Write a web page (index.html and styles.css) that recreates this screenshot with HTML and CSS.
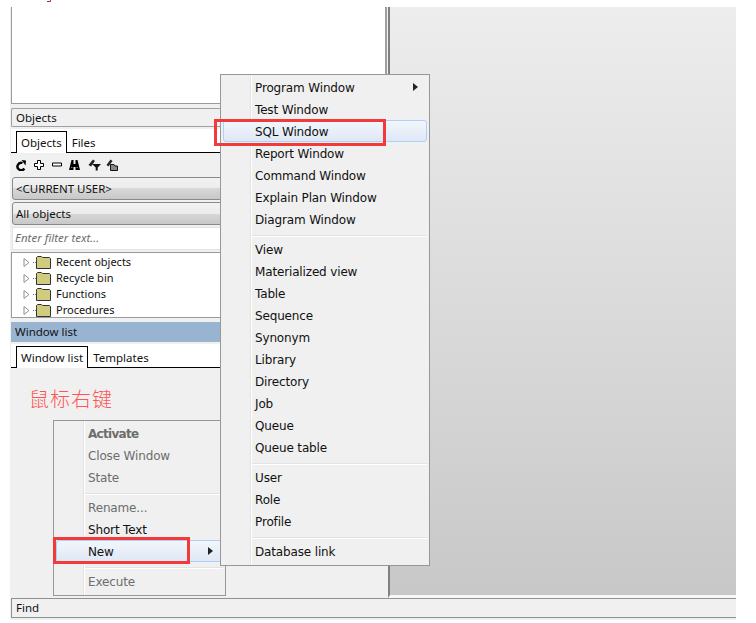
FILE: index.html
```html
<!DOCTYPE html>
<html lang="en">
<head>
<meta charset="utf-8">
<title>PL/SQL Developer</title>
<link rel="stylesheet" href="styles.css">
</head>
<body>
<div class="page">
  <div class="crumb"><svg class="brace" width="6" height="7" viewBox="0 0 6 7"><path d="M4.5 0 V1.5 H1" fill="none" stroke="#a03030" stroke-width="1"/></svg></div>
  <div class="app">
    <div class="main">
      <div class="left">
        <div class="editor"></div>
        <div class="panel-head">Objects</div>
        <div class="tabs">
          <span class="tab active">Objects</span><span class="tab">Files</span>
        </div>
        <div class="toolbar">
          <svg width="10" height="11" viewBox="0 0 10 11"><path d="M8.3 8.5 A3.7 3.7 0 1 1 6.5 3" fill="none" stroke="#000" stroke-width="2.4"/><path d="M5.5 0 L10 .5 L9.5 5.5 Z" fill="#000"/></svg>
          <svg width="10" height="10" viewBox="0 0 10 10"><path d="M3.5 .5 H6.5 V3.5 H9.5 V6.5 H6.5 V9.5 H3.5 V6.5 H.5 V3.5 H3.5 Z" fill="#fff" stroke="#000"/></svg>
          <svg width="10" height="10" viewBox="0 0 10 10"><path d="M.5 3 H9.5 V6 H.5 Z" fill="#fff" stroke="#000"/></svg>
          <svg class="tool-binoc" width="11" height="11" viewBox="0 0 11 11"><path d="M1.5 4 L2.5 0 H4.5 V4 H6.5 V0 H8.5 L9.5 4 L11 10 H6.5 V7 H4.5 V10 H0 Z" fill="#000"/><path d="M2 7.5 H3.5 M7.5 7.5 H9" stroke="#777"/></svg>
          <svg width="13" height="12" viewBox="0 0 13 12"><path d="M.5 6 L5 .5 L7 2 L3 7.5 Z" fill="#222"/><path d="M4 5 H13 L9.7 8.5 V11.5 H7.7 V8.5 Z" fill="#111"/></svg>
          <svg class="tool-key" width="12" height="12" viewBox="0 0 12 12"><path d="M.5 6 L4.5 .5 L6.5 2 L2.5 7.5 Z" fill="#222"/><path d="M4.5 5.5 H8 L9 7 H11.5 V11.5 H4.5 Z" fill="#8a8a8a" stroke="#111"/></svg>
        </div>
        <div class="combo">&lt;CURRENT USER&gt;</div>
        <div class="combo">All objects</div>
        <div class="filter">Enter filter text...</div>
        <div class="tree">
          <div class="node"><svg class="tw" width="7" height="9" viewBox="0 0 7 9"><path d="M1 .5 L6 4.5 L1 8.5 Z" fill="#fff" stroke="#909090"/></svg><span class="dots"></span><svg class="folder" width="15" height="13" viewBox="0 0 15 13"><path d="M.5 3.5 V1.5 L1.5 .5 H5.5 L6.5 1.5 H13.5 L14.5 2.5 V12.5 H.5 Z" fill="#cfcc80" stroke="#333"/></svg>Recent objects</div>
          <div class="node"><svg class="tw" width="7" height="9" viewBox="0 0 7 9"><path d="M1 .5 L6 4.5 L1 8.5 Z" fill="#fff" stroke="#909090"/></svg><span class="dots"></span><svg class="folder" width="15" height="13" viewBox="0 0 15 13"><path d="M.5 3.5 V1.5 L1.5 .5 H5.5 L6.5 1.5 H13.5 L14.5 2.5 V12.5 H.5 Z" fill="#cfcc80" stroke="#333"/></svg>Recycle bin</div>
          <div class="node"><svg class="tw" width="7" height="9" viewBox="0 0 7 9"><path d="M1 .5 L6 4.5 L1 8.5 Z" fill="#fff" stroke="#909090"/></svg><span class="dots"></span><svg class="folder" width="15" height="13" viewBox="0 0 15 13"><path d="M.5 3.5 V1.5 L1.5 .5 H5.5 L6.5 1.5 H13.5 L14.5 2.5 V12.5 H.5 Z" fill="#cfcc80" stroke="#333"/></svg>Functions</div>
          <div class="node"><svg class="tw" width="7" height="9" viewBox="0 0 7 9"><path d="M1 .5 L6 4.5 L1 8.5 Z" fill="#fff" stroke="#909090"/></svg><span class="dots"></span><svg class="folder" width="15" height="13" viewBox="0 0 15 13"><path d="M.5 3.5 V1.5 L1.5 .5 H5.5 L6.5 1.5 H13.5 L14.5 2.5 V12.5 H.5 Z" fill="#cfcc80" stroke="#333"/></svg>Procedures</div>
        </div>
        <div class="panel-head selected">Window list</div>
        <div class="tabs second">
          <span class="tab active">Window list</span><span class="tab">Templates</span>
        </div>
        <div class="note">鼠标右键</div>
      </div>
      <div class="right"></div>
    </div>
    <div class="status">Find</div>
  </div>

  <div class="menu menu-context">
    <div class="item bold disabled">Activate</div>
    <div class="item disabled">Close Window</div>
    <div class="item disabled">State</div>
    <div class="sep"></div>
    <div class="item disabled">Rename...</div>
    <div class="item">Short Text</div>
    <div class="item hot">New<span class="arrow"></span></div>
    <div class="sep"></div>
    <div class="item disabled">Execute</div>
  </div>

  <div class="menu menu-new">
    <div class="item">Program Window<span class="arrow"></span></div>
    <div class="item">Test Window</div>
    <div class="item hot">SQL Window</div>
    <div class="item">Report Window</div>
    <div class="item">Command Window</div>
    <div class="item">Explain Plan Window</div>
    <div class="item">Diagram Window</div>
    <div class="sep"></div>
    <div class="item">View</div>
    <div class="item">Materialized view</div>
    <div class="item">Table</div>
    <div class="item">Sequence</div>
    <div class="item">Synonym</div>
    <div class="item">Library</div>
    <div class="item">Directory</div>
    <div class="item">Job</div>
    <div class="item">Queue</div>
    <div class="item">Queue table</div>
    <div class="sep"></div>
    <div class="item">User</div>
    <div class="item">Role</div>
    <div class="item">Profile</div>
    <div class="sep"></div>
    <div class="item">Database link</div>
  </div>

  <div class="callout callout-new"></div>
  <div class="callout callout-sql"></div>
</div>
</body>
</html>
```
FILE: styles.css
```css
* { box-sizing: border-box; }
html, body { margin: 0; padding: 0; background: #fff; }
body { font-family: "Noto Sans", "DejaVu Sans", sans-serif; font-size: 11.5px; color: #111; }
.page { position: relative; width: 756px; height: 623px; overflow: hidden; padding-left: 10px; }
.crumb { height: 7px; }
.brace { display: block; margin-left: 36px; }
.app { width: 726px; height: 613px; background: #f0f0f0; display: flex; flex-direction: column; }
.main { display: flex; height: 591px; }
.left { width: 378px; display: flex; flex-direction: column; overflow: hidden; }
.right { flex: 1; border-left: 2px solid #808080; border-bottom: 3px solid #f8f8f8; background: linear-gradient(#ededed, #c8c8c8); }
.editor { height: 97px; margin: 0 1px; background: #fff; border-left: 1px solid #9a9a9a; border-right: 2px solid #a0a0a0; border-bottom: 1px solid #9a9a9a; flex: none; }
.panel-head { flex: none; height: 19px; margin: 4px 0 0 1px; padding-left: 4px; line-height: 18px; border: 1px solid #a0a0a0; border-right: 0; border-radius: 2px 0 0 2px; }
.panel-head.selected { height: 20px; padding-left: 4px; margin-top: 4px; background: #99b4d1; border: 0; border-radius: 0; line-height: 20px; }
.tabs { flex: none; height: 24px; margin: 2px 0 0 1px; padding: 2px 0 0 5px; background: #fff; border-bottom: 1px solid #000; display: flex; }
.tabs.second { margin-top: 2px; }
.tab { padding: 0 5px; height: 22px; line-height: 23px; }
.tab.active { background: #fff; border: 1px solid #000; border-bottom: 0; padding: 0 4px; line-height: 22px; }
.toolbar { flex: none; height: 24px; display: flex; align-items: center; gap: 8px; padding-left: 6px; }
.tool-binoc { margin-left: -1px; }
.tool-key { margin-left: -3px; }
.combo { flex: none; height: 23px; margin: 0 0 2px 2px; padding-left: 3px; line-height: 22px; border: 1px solid #8a8a8a; border-radius: 3px; background: linear-gradient(#f2f2f2 0, #ececec 50%, #d8d8d8 50%, #c8c8c8 100%); }
.filter { flex: none; height: 23px; margin: 0 0 2px 2px; padding-left: 2px; line-height: 20px; background: #fff; border: 1px solid #e4e4e4; color: #6d6d6d; font-style: italic; }
.tree { flex: none; height: 66px; margin-left: 1px; background: #fff; border: 1px solid #9a9a9a; overflow: hidden; padding-top: 1px; font-size: 11px; }
.node { height: 16px; line-height: 16px; display: flex; align-items: center; padding-left: 11px; white-space: nowrap; }
.tw { flex: none; }
.dots { width: 5px; margin: 0 0 0 3px; height: 1px; border-top: 1px dotted #808080; flex: none; }
.folder { flex: none; margin-right: 5px; margin-left: -2px; }
.note { margin: 19px 0 0 19px; font-family: "Noto Sans CJK SC", sans-serif; font-size: 20px; line-height: 24px; letter-spacing: 1px; color: #f55; font-weight: 300; }
.status { height: 20px; margin: 0 0 0 1px; padding-left: 4px; line-height: 18px; border: 1px solid #909090; border-right: 0; }
.menu { position: absolute; font-family: "DejaVu Sans", sans-serif; font-size: 12px; background: linear-gradient(90deg, transparent 29px, #e2e3e3 29px, #e2e3e3 30px, #fff 30px, #fff 31px, transparent 31px) #f0f0f0; border: 1px solid #979797; padding: 1px 2px 2px; letter-spacing: -.15px; }
.menu-context { left: 53px; top: 420px; width: 173px; height: 176px; }
.menu-new { left: 220px; top: 74px; width: 210px; height: 492px; }
.item { position: relative; height: 22px; line-height: 24px; padding-left: 32px; white-space: nowrap; }
.item.disabled { color: #6d6d6d; }
.item.bold { font-weight: 700; letter-spacing: -.7px; }
.item.hot { background: linear-gradient(#f2f6fc, #dfe8f6); border: 1px solid #aecff7; border-radius: 3px; line-height: 22px; padding-left: 31px; }
.sep { height: 8px; margin-left: 29px; position: relative; }
.sep::after { content: ""; display: block; position: absolute; left: 0; right: 0; top: 5px; height: 2px; background: linear-gradient(#e2e3e3 50%, #fff 50%); }
.arrow { position: absolute; right: 9px; top: 50%; margin-top: -4px; border-left: 5px solid #222; border-top: 4px solid transparent; border-bottom: 4px solid transparent; }
.callout { position: absolute; border: 3px solid #f33a3a; }
.callout-sql { left: 214px; top: 119px; width: 172px; height: 27px; }
.callout-new { left: 53px; top: 537px; width: 137px; height: 27px; }
```
